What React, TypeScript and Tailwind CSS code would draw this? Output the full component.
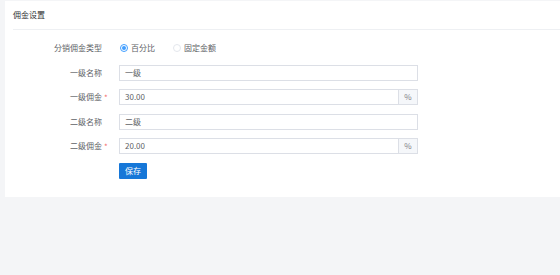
const font = { fontFamily: '"Noto Sans CJK SC", "Liberation Sans", sans-serif' };

function Label({ text, required }: { text: string; required?: boolean }) {
  return (
    <>
      <div className="w-[97px] text-right text-[8px] leading-[16px] text-[#606266]">{text}</div>
      <div className="w-[17px] pl-[2px] pt-[2px] text-[8px] leading-[16px] text-[#f56c6c]">{required ? "*" : ""}</div>
    </>
  );
}

function TextField({ value, suffix }: { value: string; suffix?: string }) {
  return (
    <div className="flex h-[16px] w-[299px] border border-[#dcdfe6] bg-white">
      <div className="flex-1 pl-[5px] text-[8px] leading-[14px] text-[#606266]">{value}</div>
      {suffix ? (
        <div className="flex w-[19px] items-center justify-center border-l border-[#dcdfe6] bg-[#f5f7fa] text-[8px] text-[#7d8087]">
          {suffix}
        </div>
      ) : null}
    </div>
  );
}

function Radio({ label, checked }: { label: string; checked?: boolean }) {
  return (
    <div className="flex items-center gap-[3px]">
      <span
        className={`flex h-[8px] w-[8px] items-center justify-center rounded-full border ${
          checked ? "border-[#409eff]" : "border-[#e4e7ed]"
        }`}
      >
        {checked ? <span className="h-[4px] w-[4px] rounded-full bg-[#409eff]" /> : null}
      </span>
      <span className="text-[8px] leading-[16px] text-[#606266]">{label}</span>
    </div>
  );
}

export default function App() {
  return (
    <div className="h-[275px] w-[560px] overflow-hidden bg-[#f4f5f7] pl-[5px] pt-[1px]" style={font}>
      <div className="h-[196px] bg-white">
        <div className="ml-[8px] flex h-[29px] items-center border-b border-[#eef0f3] text-[8px] text-[#303133]">
          佣金设置
        </div>
        <div className="flex flex-col gap-[8.5px] pt-[10px]">
          <div className="flex h-[16px] items-center">
            <Label text="分销佣金类型" />
            <div className="flex items-center gap-[18px] pl-[1px]">
              <Radio label="百分比" checked />
              <Radio label="固定金额" />
            </div>
          </div>
          <div className="flex h-[16px] items-center">
            <Label text="一级名称" />
            <TextField value="一级" />
          </div>
          <div className="flex h-[16px] items-center">
            <Label text="一级佣金" required />
            <TextField value="30.00" suffix="%" />
          </div>
          <div className="flex h-[16px] items-center">
            <Label text="二级名称" />
            <TextField value="二级" />
          </div>
          <div className="flex h-[16px] items-center">
            <Label text="二级佣金" required />
            <TextField value="20.00" suffix="%" />
          </div>
          <div className="flex h-[16px] items-center">
            <div className="w-[114px]" />
            <button className="h-[16px] w-[28px] rounded-[1px] bg-[#1677d8] text-[8px] leading-[16px] text-white">
              保存
            </button>
          </div>
        </div>
      </div>
    </div>
  );
}
